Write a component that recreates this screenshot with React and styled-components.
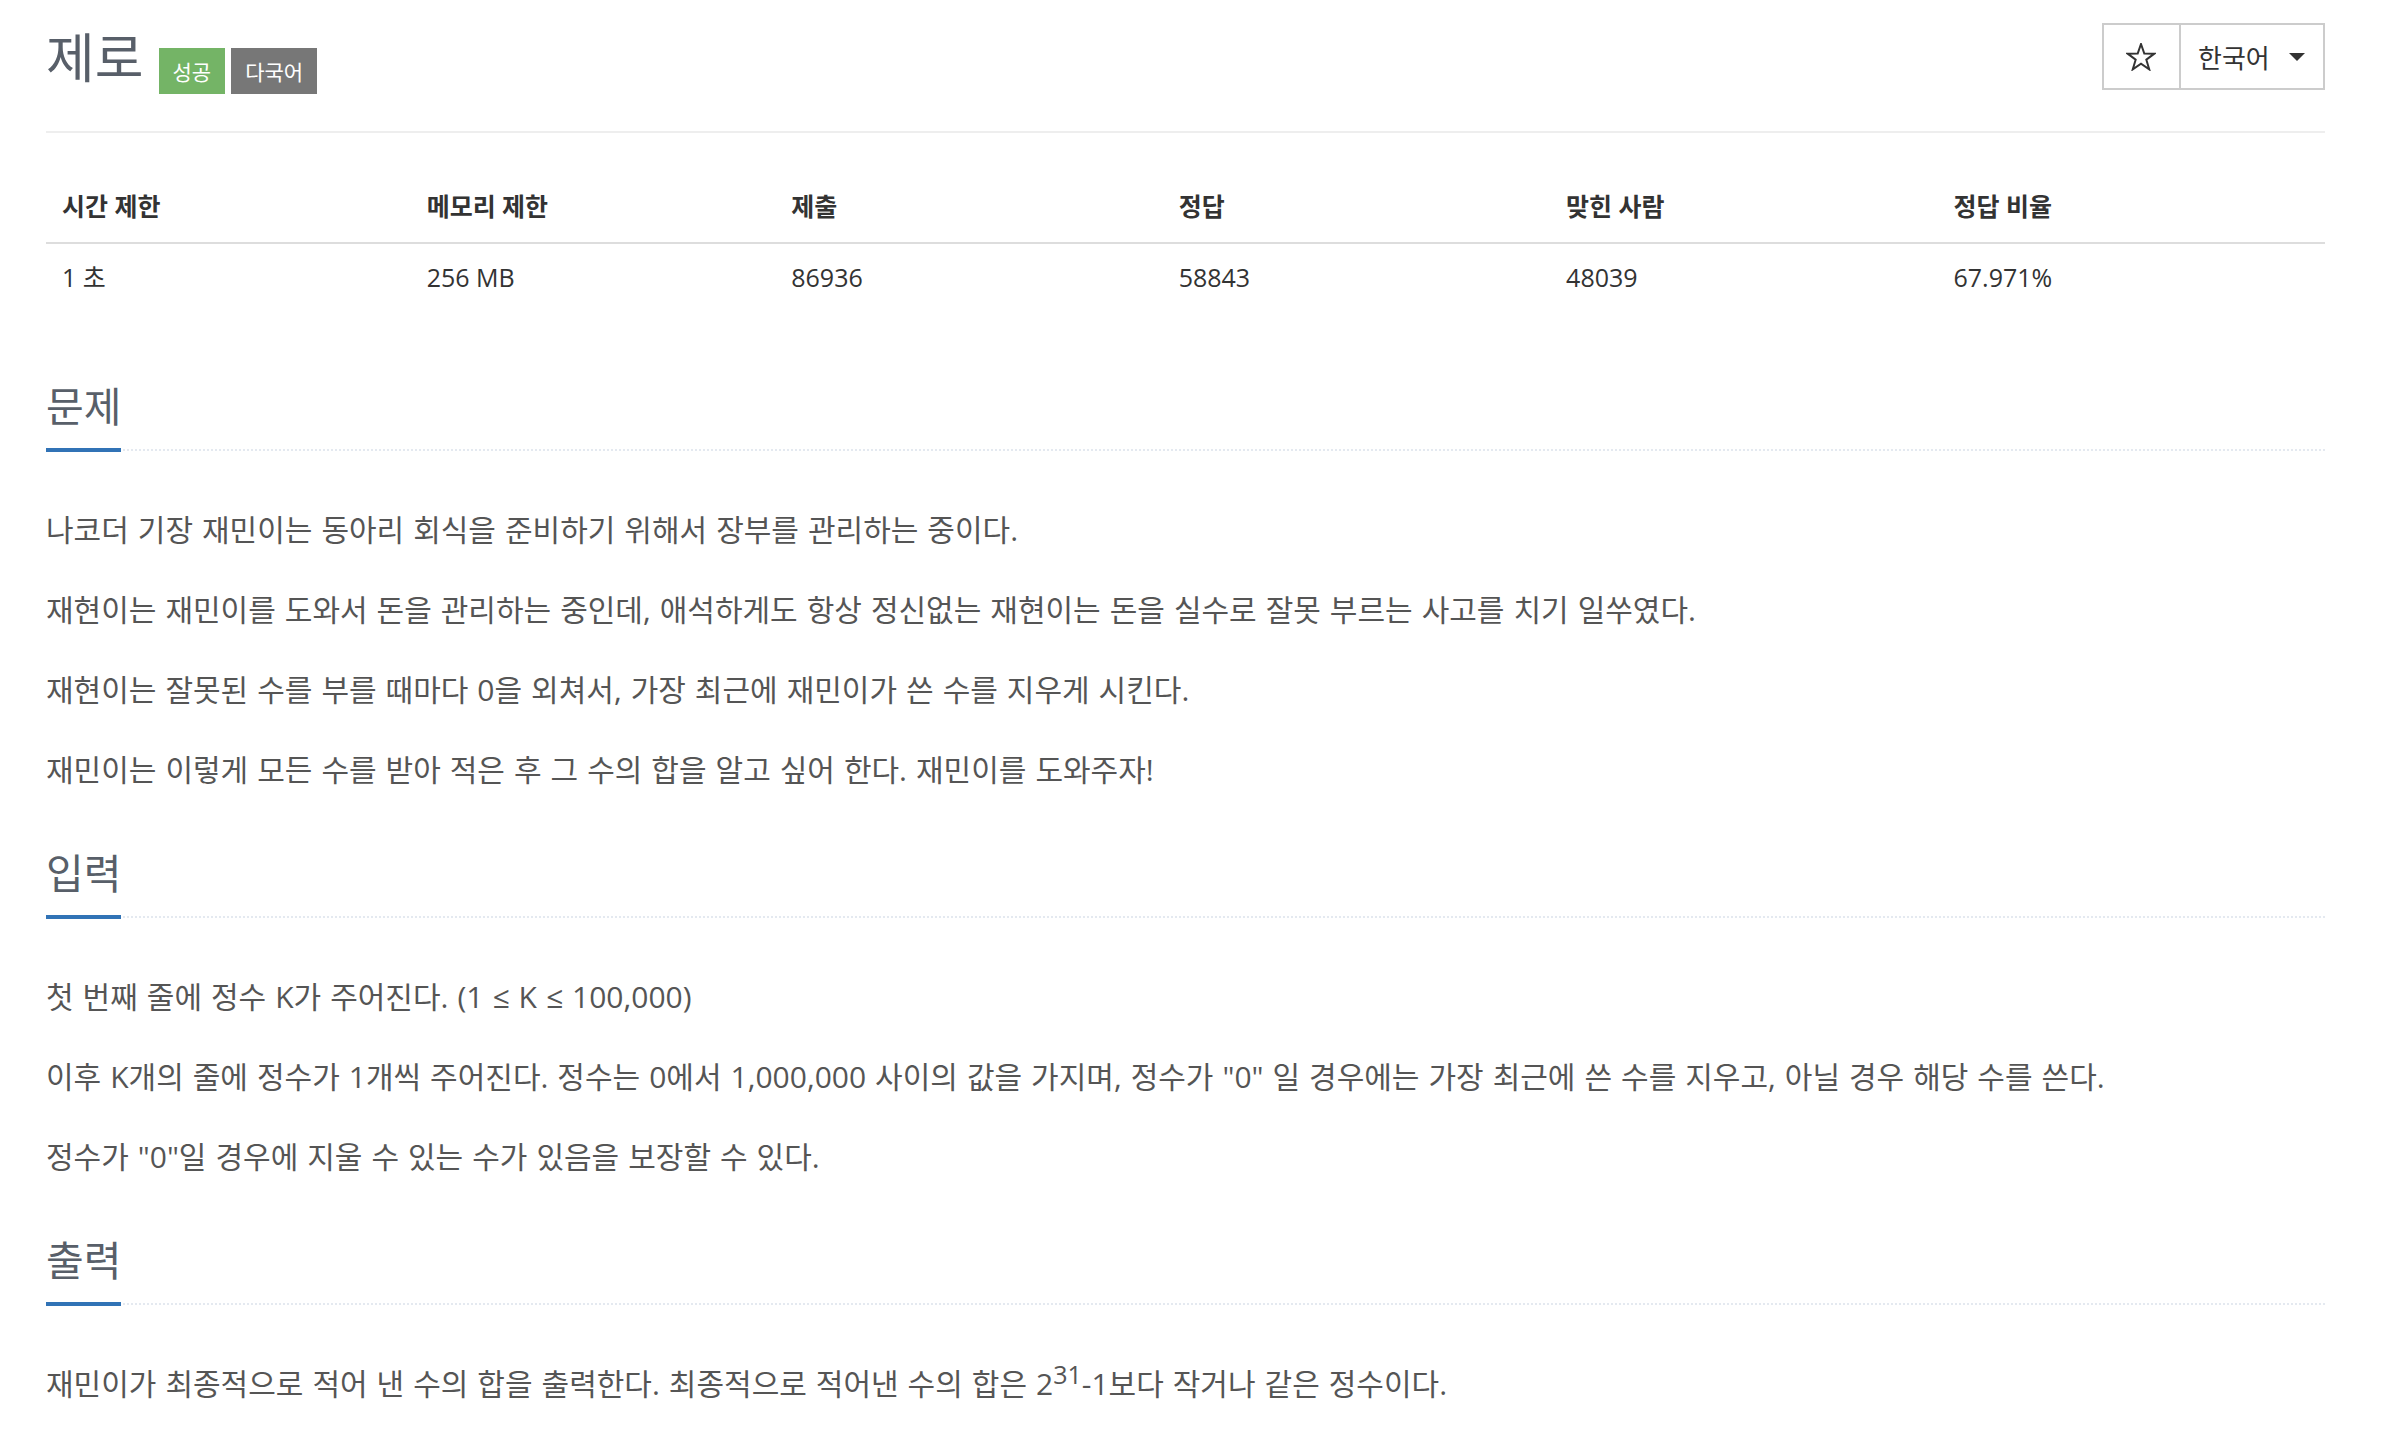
// Dependencies
import React from "react";
import styled, { createGlobalStyle } from "styled-components";

// Global styles
const GlobalStyle = createGlobalStyle`
  html, body {
    margin: 0;
    padding: 0;
    background: #fff;
  }
  body {
    font-family: "Open Sans", "Noto Sans CJK KR", sans-serif;
    color: #333;
  }
`;

// Styled-Components
const Page = styled.div`
  display: flex;
  flex-direction: column;
  width: 2279px;
  padding: 0 65px 40px 46px;
`;
const Header = styled.header`
  display: flex;
  justify-content: space-between;
  align-items: flex-start;
  height: 108px;
  padding-top: 23px;
  border-bottom: 2px solid #eee;
`;
const TitleRow = styled.div`
  display: flex;
  align-items: flex-start;
  gap: 6px;
  margin-top: 9px;
`;
const Title = styled.h1`
  margin: 0 9px 0 0;
  font-size: 53px;
  line-height: 52px;
  font-weight: 400;
  color: #585f69;
`;
const Badge = styled.span`
  display: inline-flex;
  align-items: center;
  height: 46px;
  margin-top: 16px;
  padding: 0 14px;
  font-size: 21px;
  color: #fff;
  background: ${(p) => (p.$tone === "success" ? "#74b466" : "#777")};
`;
const ButtonGroup = styled.div`
  display: flex;
`;
const GroupButton = styled.button`
  box-sizing: border-box;
  display: flex;
  align-items: center;
  justify-content: ${(p) => (p.$icon ? "center" : "space-between")};
  width: ${(p) => p.$width};
  height: 67px;
  padding: 0 18px 0 17px;
  border: 2px solid #ccc;
  background: #fff;
  color: #333;
  font-family: inherit;
  font-size: 26px;
  & + & {
    margin-left: -2px;
  }
`;
const Caret = styled.span`
  width: 0;
  height: 0;
  border-top: 8px solid #333;
  border-left: 8px solid transparent;
  border-right: 8px solid transparent;
`;
const InfoTable = styled.table`
  width: 100%;
  margin: 37px 0 17px;
  border-collapse: collapse;
  font-size: 25px;
  color: #333;
`;
const Th = styled.th`
  width: ${(p) => p.$w};
  padding: 16px;
  line-height: 40px;
  text-align: left;
  font-weight: 700;
  border-bottom: 2px solid #ddd;
`;
const Td = styled.td`
  padding: 13px 16px 19px;
  line-height: 40px;
`;
const Section = styled.section`
  margin-top: 51px;
`;
const Headline = styled.div`
  display: flex;
  margin-bottom: 49px;
  border-bottom: 2px dotted #e4e9f0;
`;
const HeadTitle = styled.h2`
  margin: 0 0 -3px;
  padding-bottom: 20px;
  font-size: 41px;
  line-height: 44px;
  font-weight: 400;
  color: #585f69;
  border-bottom: 4px solid #3173b6;
`;
const Body = styled.div`
  display: flex;
  flex-direction: column;
  gap: 20px;
`;
const Para = styled.p`
  margin: 0;
  font-size: 30px;
  line-height: 60px;
  word-spacing: 1.2px;
  color: #555;
  sup {
    line-height: 0;
  }
`;

const Star = () => (
  <svg width="30" height="28" viewBox="-1 -1 30 28">
    <polygon
      points="14,0 17.29,9.47 27.31,9.67 19.33,15.73 22.23,25.33 14,19.6 5.77,25.33 8.67,15.73 0.69,9.67 10.71,9.47"
      fill="none"
      stroke="#333"
      strokeWidth="2"
      strokeLinejoin="miter"
    />
  </svg>
);

const stats = [
  { label: "시간 제한", value: "1 초", w: "16%" },
  { label: "메모리 제한", value: "256 MB", w: "16%" },
  { label: "제출", value: "86936", w: "17%" },
  { label: "정답", value: "58843", w: "17%" },
  { label: "맞힌 사람", value: "48039", w: "17%" },
  { label: "정답 비율", value: "67.971%", w: "17%" },
];

// React Component
const App = () => {
  return (
    <Page>
      <GlobalStyle />
      <Header>
        <TitleRow>
          <Title>제로</Title>
          <Badge $tone="success">성공</Badge>
          <Badge>다국어</Badge>
        </TitleRow>
        <ButtonGroup>
          <GroupButton $icon $width="79px">
            <Star />
          </GroupButton>
          <GroupButton $width="146px">
            한국어 <Caret />
          </GroupButton>
        </ButtonGroup>
      </Header>

      <InfoTable>
        <thead>
          <tr>
            {stats.map((s) => (
              <Th key={s.label} $w={s.w}>
                {s.label}
              </Th>
            ))}
          </tr>
        </thead>
        <tbody>
          <tr>
            {stats.map((s) => (
              <Td key={s.label}>{s.value}</Td>
            ))}
          </tr>
        </tbody>
      </InfoTable>

      <Section>
        <Headline>
          <HeadTitle>문제</HeadTitle>
        </Headline>
        <Body>
          <Para>나코더 기장 재민이는 동아리 회식을 준비하기 위해서 장부를 관리하는 중이다.</Para>
          <Para>
            재현이는 재민이를 도와서 돈을 관리하는 중인데, 애석하게도 항상 정신없는 재현이는 돈을 실수로 잘못
            부르는 사고를 치기 일쑤였다.
          </Para>
          <Para>재현이는 잘못된 수를 부를 때마다 0을 외쳐서, 가장 최근에 재민이가 쓴 수를 지우게 시킨다.</Para>
          <Para>재민이는 이렇게 모든 수를 받아 적은 후 그 수의 합을 알고 싶어 한다. 재민이를 도와주자!</Para>
        </Body>
      </Section>

      <Section>
        <Headline>
          <HeadTitle>입력</HeadTitle>
        </Headline>
        <Body>
          <Para>첫 번째 줄에 정수 K가 주어진다. (1 ≤ K ≤ 100,000)</Para>
          <Para>
            이후 K개의 줄에 정수가 1개씩 주어진다. 정수는 0에서 1,000,000 사이의 값을 가지며, 정수가 "0" 일
            경우에는 가장 최근에 쓴 수를 지우고, 아닐 경우 해당 수를 쓴다.
          </Para>
          <Para>정수가 "0"일 경우에 지울 수 있는 수가 있음을 보장할 수 있다.</Para>
        </Body>
      </Section>

      <Section>
        <Headline>
          <HeadTitle>출력</HeadTitle>
        </Headline>
        <Body>
          <Para>
            재민이가 최종적으로 적어 낸 수의 합을 출력한다. 최종적으로 적어낸 수의 합은 2<sup>31</sup>-1보다
            작거나 같은 정수이다.
          </Para>
        </Body>
      </Section>
    </Page>
  );
};

export default App;
